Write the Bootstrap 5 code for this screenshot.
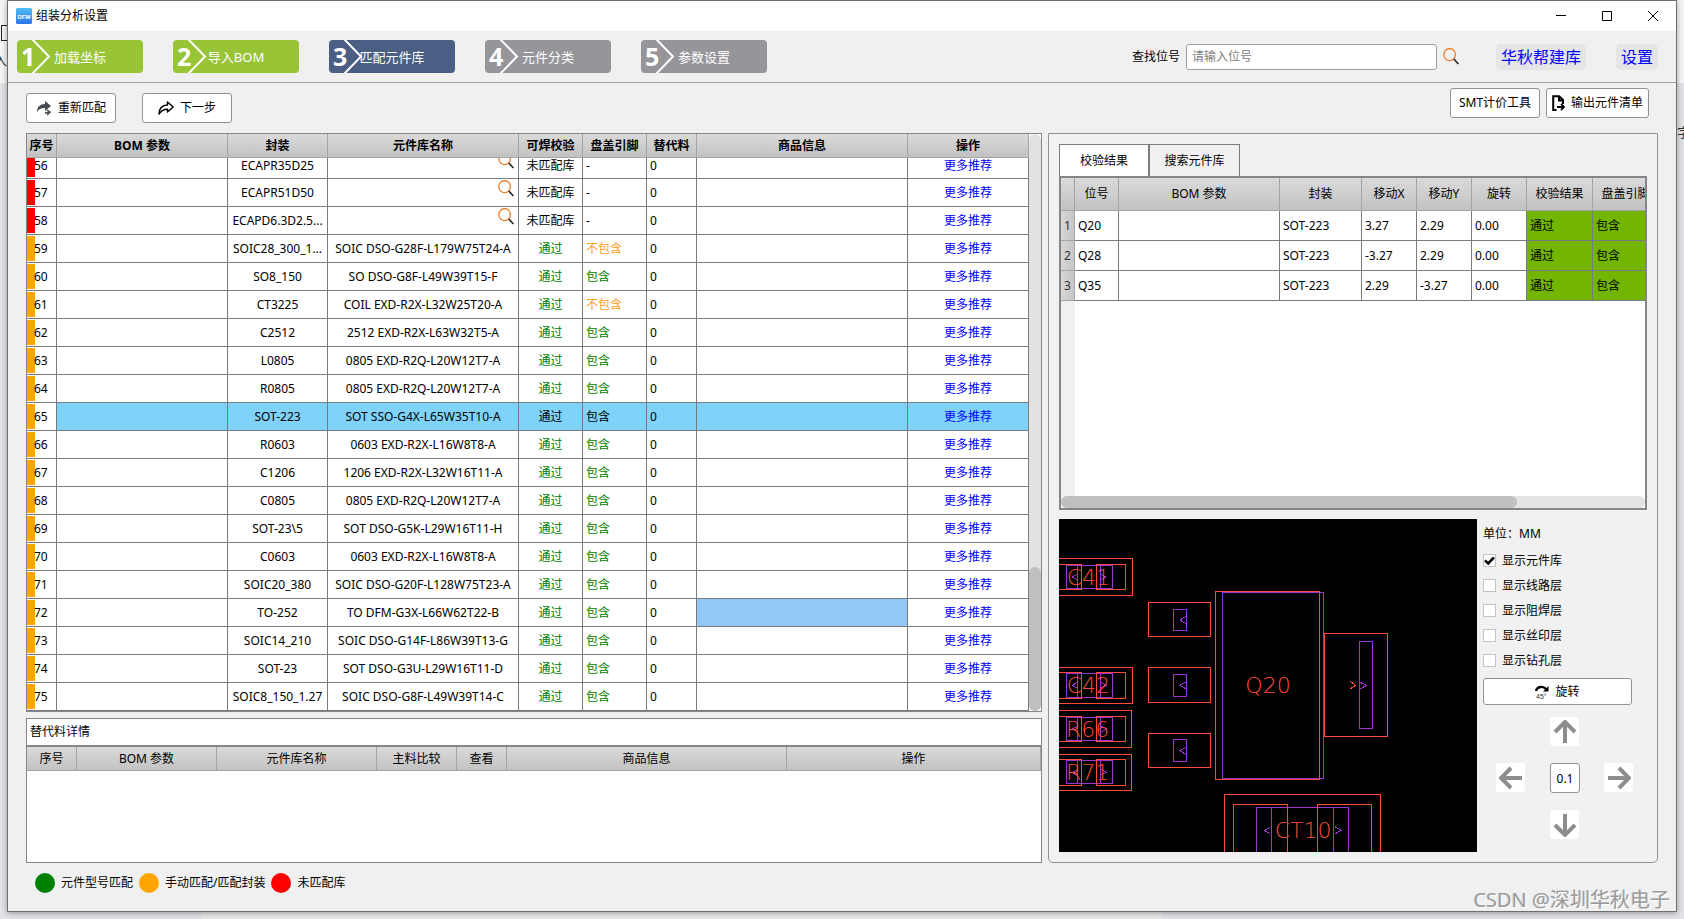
<!DOCTYPE html>
<html lang="zh-CN">
<head>
<meta charset="utf-8">
<meta name="viewport" content="width=device-width, initial-scale=1">
<title>组装分析设置</title>
<link href="https://cdn.jsdelivr.net/npm/bootstrap@5.3.0/dist/css/bootstrap.min.css" rel="stylesheet">
<style>
  body { font-family: "Noto Sans", "Noto Sans CJK SC", sans-serif; font-size: 12px; line-height: 16px; color: #000; min-height: 100vh; padding: 0 7px 7px;
    background: linear-gradient(90deg, transparent 12%, #e9e9ea 12% 69%, transparent 69%) bottom / 100% 7px no-repeat, linear-gradient(#f6f6f7 0 83px, #e1e3e6 83px); overflow-x: hidden; }
  button, input, label { font-size: 12px; line-height: 16px; color: #000; }
  .behind { position: absolute; overflow: hidden; width: 7px; height: 16px; font-size: 13px; color: #333; }
  .behind-left { left: 0; top: 52px; direction: rtl; }
  .behind-right { right: 0; top: 124px; }
  .behind-box { position: absolute; left: 1px; top: 25px; width: 8px; height: 16px; border: 1px solid #222; }
  .win { position: relative; background: #f0f0f0; border: 1px solid #6e6e6e; box-shadow: 0 1px 6px rgba(0,0,0,.35); min-height: calc(100vh - 7px); }
  .titlebar { height: 30px; background: #fff; padding: 0 18px 0 8px; }
  .applogo { width: 16px; height: 16px; }
  .winbtn { border: 0; background: none; padding: 0; width: 10px; height: 16px; display: flex; align-items: center; }
  .steps { height: 52px; border-bottom: 1px solid #a0a0a0; padding: 0 18px 0 9px; }
  .step { position: relative; width: 126px; height: 33px; border: 0; border-radius: 4px; color: #fff; font-size: 13px; padding: 0; background: #96969a; }
  .step.done { background: #98c435; }
  .step.now { background: #4b5e84; }
  .step b { position: absolute; left: 4px; top: 0; font-size: 25px; line-height: 33px; }
  .step svg { position: absolute; left: 14px; top: 0; }
  .find { width: 251px; height: 26px; border: 1px solid #a0a0a0; border-radius: 3px; padding: 0 5px; margin: 0 6px; background: #fff; }
  .find::placeholder { color: #808080; }
  .iconbtn { border: 0; background: none; padding: 0; display: flex; }
  .bluelink { background: #e5e5e6; border-radius: 5px; color: #00f; font-size: 16px; line-height: 26px; padding: 0 5px; text-decoration: none; }
  .tool { height: 30px; border: 1px solid #929292; border-radius: 3px; background: #fff; padding: 0 5px; display: flex; align-items: center; justify-content: center; gap: 6px; white-space: nowrap; }
  .wide { width: 90px; }
  .toolrow { padding: 5px 27px 0 18px; height: 50px; }
  .toolrow > .tool { margin-top: 5px; }
  .content { display: grid; grid-template-columns: minmax(0, 1016fr) minmax(0, 610fr); padding: 0 18px; gap: 6px; }
  .rightside { border: 1px solid #929292; border-radius: 0 0 5px 5px; padding: 10px; background: #f1f1f1; }
  .box { background: #fff; border: 1px solid #85858c; }
  .sheet { width: 100%; table-layout: fixed; border-collapse: separate; border-spacing: 0; }
  .sheet th { height: 24px; padding: 0; text-align: center; font-weight: 400; white-space: nowrap; overflow: hidden; background: linear-gradient(#dadada, #c2c2c2); border-right: 1px solid #a5a5a5; border-bottom: 1px solid #a5a5a5; }
  .sheet td { height: 28px; padding: 0 3px; overflow: hidden; white-space: nowrap; border-right: 1px solid #7b7b7e; border-bottom: 1px solid #7b7b7e; vertical-align: middle; }
  .main-sheet th { font-weight: 700; }
  .main-sheet td:nth-child(1) { padding: 0 0 0 7px; background: linear-gradient(orange, orange) 0 1px / 8px 25px no-repeat #fff; }
  .main-sheet tr.miss td:nth-child(1) { background-image: linear-gradient(red, red); }
  .main-sheet td:nth-child(3), .main-sheet td:nth-child(5), .main-sheet td:nth-child(9) { text-align: center; }
  .main-sheet td:nth-child(4) { padding: 0 5px; position: relative; }
  .main-sheet td:nth-child(4) div { display: flex; justify-content: center; overflow: hidden; }
  .main-sheet td:nth-child(5), .main-sheet td:nth-child(6) { color: green; }
  .main-sheet tr.miss td:nth-child(5), .main-sheet tr.miss td:nth-child(6), .main-sheet tr.sel td { color: #000; }
  .main-sheet td.no { color: #ff9a16 !important; }
  .main-sheet td button { position: absolute; right: 4px; top: 1px; }
  .main-sheet tr.cut td { height: 21px; line-height: 14px; padding-bottom: 5px; background-size: 8px 19px; background-position: 0 0; }
  .main-sheet tr.cut td button { top: -6px; }
  .main-sheet tr.sel td:nth-child(n+2) { background: #7fd3f8; }
  .main-sheet a { color: #00f; text-decoration: none; }
  .picked { background: #91c8f6; }
  .vbar { width: 12px; background: #e2e2e2; border-radius: 6px; }
  .vthumb { background: #c0c0c0; border-radius: 6px; height: 25%; }
  .hbar { height: 12px; background: #e4e4e4; border-radius: 6px; }
  .hthumb { background: #c0c0c0; border-radius: 6px; width: 78%; height: 12px; }
  .alt { height: 145px; margin-top: 6px; }
  .alt-title { height: 28px; padding: 5px 3px 0; border-bottom: 2px solid #85858c; }
  .legend { padding: 10px 9px 0; height: 48px; gap: 6px; align-items: flex-start; line-height: 20px; }
  .dot { width: 20px; height: 20px; border-radius: 50%; flex: none; }
  .tabbtn { width: 91px; height: 32px; border: 1px solid #7c7c7c; border-bottom: 0; background: #f1f1f1; margin-right: -1px; padding: 0; }
  .tabbtn.active { background: #fff; border-width: 1px 2px 0 1px; }
  .check-box { border: 2px solid #85858c; height: 334px; background: linear-gradient(90deg, #f0f0f0 14px, #fff 14px); }
  .check-sheet { min-width: 598px; }
  .check-sheet th { height: 33px; }
  .check-sheet td { height: 30px; }
  .check-sheet tbody th { background: linear-gradient(90deg, #d6d6d6, #c6c6c6); height: 30px; color: #333; }
  .check-sheet .ok { background: #72b503; }
  .board { height: 333px; flex: 1 1 0; min-width: 0; background: #000; display: block; }
  .side { width: 164px; }
  .side .opt { display: flex; align-items: center; gap: 6px; height: 25px; }
  .opt input { appearance: none; width: 13px; height: 13px; margin: 0; border: 1px solid #c4c4c4; background: #fff; flex: none; }
  .opt input:checked { background: #fff url("data:image/svg+xml,%3Csvg xmlns='http://www.w3.org/2000/svg' viewBox='0 0 11 11'%3E%3Cpath d='M1 5.4 4.2 8.4 10 2.4' fill='none' stroke='%23000' stroke-width='2.6'/%3E%3C/svg%3E") center / 11px no-repeat; }
  .unit { padding: 7px 0 6px; }
  .rotate { width: 149px; height: 27px; margin-top: 5px; }
  .pad { display: grid; grid-template-columns: 30px 30px 30px; column-gap: 24px; row-gap: 17px; margin: 12px 0 0 13px; }
  .pad button { width: 29px; height: 29px; border: 0; border-radius: 3px; background: #fff; padding: 0; display: flex; align-items: center; justify-content: center; }
  .pad input { width: 30px; height: 30px; border: 1px solid #929292; border-radius: 3px; text-align: center; padding: 0; background: #fff; }
  .watermark { position: absolute; right: 14px; bottom: 6px; font-size: 20px; line-height: 26px; color: #9b9b9b; text-shadow: 1px 1px 0 #fff, -1px 0 0 #d5d5d5; pointer-events: none; white-space: nowrap; }
</style>
</head>
<body class="position-relative">
<div class="behind behind-left">入</div><div class="behind-box"></div><div class="behind behind-right">字</div>
<svg width="0" height="0" class="position-absolute" aria-hidden="true">
  <symbol id="mag" viewBox="0 0 16 17"><ellipse cx="6.6" cy="6.6" rx="5.8" ry="6" fill="none" stroke="#ec7a26" stroke-width="1.3"/><path d="m10.8 11 4.6 5" stroke="#222" stroke-width="1.6"/></symbol>
  <symbol id="arrow" viewBox="0 0 24 24"><path d="M12 23V3M2 12 12 2l10 10" fill="none" stroke="#8d8d8d" stroke-width="4"/></symbol>
</svg>
<div class="win">
  <header class="titlebar d-flex align-items-center">
    <svg class="applogo" viewBox="0 0 16 16"><defs><linearGradient id="lg" x2="0" y2="1"><stop stop-color="#4dbdf0"/><stop offset="1" stop-color="#2f74ea"/></linearGradient></defs><rect width="16" height="16" rx="1.5" fill="url(#lg)"/><text x="8" y="10.5" text-anchor="middle" font-family="Liberation Sans" font-weight="700" font-size="6" fill="#fff">DFM</text></svg>
    <span class="ms-1">组装分析设置</span>
    <div class="ms-auto d-flex" style="gap:36px">
      <button class="winbtn" aria-label="最小化"><svg width="10" height="10"><path d="M0 4.5h10" stroke="#000"/></svg></button>
      <button class="winbtn" aria-label="最大化"><svg width="10" height="10"><path d="M.5.5h9v9h-9z" fill="none" stroke="#000"/></svg></button>
      <button class="winbtn" aria-label="关闭"><svg width="10" height="10"><path d="m0 0 10 10M10 0 0 10" stroke="#000"/></svg></button>
    </div>
  </header>
  <nav class="steps d-flex align-items-center">
    <div class="d-flex" style="gap:30px">
      <button class="step done"><b>1</b><svg width="22" height="33"><path d="m1-1 17 17.500L1 34" fill="none" stroke="#fff" stroke-width="2"/></svg>加载坐标</button>
      <button class="step done"><b>2</b><svg width="22" height="33"><path d="m1-1 17 17.500L1 34" fill="none" stroke="#fff" stroke-width="2"/></svg>导入BOM</button>
      <button class="step now"><b>3</b><svg width="22" height="33"><path d="m1-1 17 17.500L1 34" fill="none" stroke="#fff" stroke-width="2"/></svg>匹配元件库</button>
      <button class="step"><b>4</b><svg width="22" height="33"><path d="m1-1 17 17.500L1 34" fill="none" stroke="#fff" stroke-width="2"/></svg>元件分类</button>
      <button class="step"><b>5</b><svg width="22" height="33"><path d="m1-1 17 17.500L1 34" fill="none" stroke="#fff" stroke-width="2"/></svg>参数设置</button>
    </div>
    <div class="ms-auto d-flex align-items-center">
      <label for="find">查找位号</label>
      <input id="find" class="find" type="text" placeholder="请输入位号">
      <button class="iconbtn" aria-label="查找"><svg width="16" height="17"><use href="#mag"/></svg></button>
      <a href="#" class="bluelink" style="margin-left:37px">华秋帮建库</a>
      <a href="#" class="bluelink" style="margin-left:30px">设置</a>
    </div>
  </nav>
  <div class="toolrow d-flex">
    <button class="tool wide"><svg width="16" height="16" viewBox="0 0 16 16"><path d="M9 1l6 5-6 5V8C5 8 3 9 1 12 1 7 4 4 9 4z" fill="#444a50"/><path d="m9 13 5-1M11 10l3 2-3 3" stroke="#444a50" stroke-width="1.500" fill="none"/></svg>重新匹配</button>
    <button class="tool wide" style="margin-left:26px"><svg width="16" height="16" viewBox="0 0 16 16"><path d="m9.500 2 5.700 5-5.700 5V9.300C5.500 9.200 3.500 10.500 1 14 1.200 8.500 4 5.200 9.500 5z" fill="none" stroke="#000" stroke-width="1.400" stroke-linejoin="round"/></svg>下一步</button>
    <div class="ms-auto d-flex" style="gap:6px">
      <button class="tool wide">SMT计价工具</button>
      <button class="tool"><svg width="13" height="17" viewBox="0 0 13 17"><path d="M4.500 15H1.200V1.200h6L11 5v4M7 1v4.500h4" fill="none" stroke="#000" stroke-width="2"/><path d="M5 12h6M9 8.800l3 3.200-3 3.200" fill="none" stroke="#000" stroke-width="1.800"/></svg>输出元件清单</button>
    </div>
  </div>
  <main class="content">
    <section class="leftside">
      <div class="box d-flex">
        <table class="sheet main-sheet flex-fill">
          <colgroup><col width="30"><col width="171"><col width="100"><col width="191"><col width="64"><col width="64"><col width="50"><col><col width="121"></colgroup>
          <thead><tr><th>序号</th><th>BOM 参数</th><th>封装</th><th>元件库名称</th><th>可焊校验</th><th>盘盖引脚</th><th>替代料</th><th>商品信息</th><th>操作</th></tr></thead>
          <tbody>
            <tr class="miss cut"><td>56</td><td></td><td>ECAPR35D25</td><td><button class="iconbtn" aria-label="搜索"><svg width="16" height="17"><use href="#mag"/></svg></button></td><td>未匹配库</td><td>-</td><td>0</td><td></td><td><a href="#">更多推荐</a></td></tr>
            <tr class="miss"><td>57</td><td></td><td>ECAPR51D50</td><td><button class="iconbtn" aria-label="搜索"><svg width="16" height="17"><use href="#mag"/></svg></button></td><td>未匹配库</td><td>-</td><td>0</td><td></td><td><a href="#">更多推荐</a></td></tr>
            <tr class="miss"><td>58</td><td></td><td>ECAPD6.3D2.5...</td><td><button class="iconbtn" aria-label="搜索"><svg width="16" height="17"><use href="#mag"/></svg></button></td><td>未匹配库</td><td>-</td><td>0</td><td></td><td><a href="#">更多推荐</a></td></tr>
            <tr><td>59</td><td></td><td>SOIC28_300_1...</td><td><div>SOIC DSO-G28F-L179W75T24-A</div></td><td>通过</td><td class="no">不包含</td><td>0</td><td></td><td><a href="#">更多推荐</a></td></tr>
            <tr><td>60</td><td></td><td>SO8_150</td><td><div>SO DSO-G8F-L49W39T15-F</div></td><td>通过</td><td>包含</td><td>0</td><td></td><td><a href="#">更多推荐</a></td></tr>
            <tr><td>61</td><td></td><td>CT3225</td><td><div>COIL EXD-R2X-L32W25T20-A</div></td><td>通过</td><td class="no">不包含</td><td>0</td><td></td><td><a href="#">更多推荐</a></td></tr>
            <tr><td>62</td><td></td><td>C2512</td><td><div>2512 EXD-R2X-L63W32T5-A</div></td><td>通过</td><td>包含</td><td>0</td><td></td><td><a href="#">更多推荐</a></td></tr>
            <tr><td>63</td><td></td><td>L0805</td><td><div>0805 EXD-R2Q-L20W12T7-A</div></td><td>通过</td><td>包含</td><td>0</td><td></td><td><a href="#">更多推荐</a></td></tr>
            <tr><td>64</td><td></td><td>R0805</td><td><div>0805 EXD-R2Q-L20W12T7-A</div></td><td>通过</td><td>包含</td><td>0</td><td></td><td><a href="#">更多推荐</a></td></tr>
            <tr class="sel"><td>65</td><td></td><td>SOT-223</td><td><div>SOT SSO-G4X-L65W35T10-A</div></td><td>通过</td><td>包含</td><td>0</td><td></td><td><a href="#">更多推荐</a></td></tr>
            <tr><td>66</td><td></td><td>R0603</td><td><div>0603 EXD-R2X-L16W8T8-A</div></td><td>通过</td><td>包含</td><td>0</td><td></td><td><a href="#">更多推荐</a></td></tr>
            <tr><td>67</td><td></td><td>C1206</td><td><div>1206 EXD-R2X-L32W16T11-A</div></td><td>通过</td><td>包含</td><td>0</td><td></td><td><a href="#">更多推荐</a></td></tr>
            <tr><td>68</td><td></td><td>C0805</td><td><div>0805 EXD-R2Q-L20W12T7-A</div></td><td>通过</td><td>包含</td><td>0</td><td></td><td><a href="#">更多推荐</a></td></tr>
            <tr><td>69</td><td></td><td>SOT-23\5</td><td><div>SOT DSO-G5K-L29W16T11-H</div></td><td>通过</td><td>包含</td><td>0</td><td></td><td><a href="#">更多推荐</a></td></tr>
            <tr><td>70</td><td></td><td>C0603</td><td><div>0603 EXD-R2X-L16W8T8-A</div></td><td>通过</td><td>包含</td><td>0</td><td></td><td><a href="#">更多推荐</a></td></tr>
            <tr><td>71</td><td></td><td>SOIC20_380</td><td><div>SOIC DSO-G20F-L128W75T23-A</div></td><td>通过</td><td>包含</td><td>0</td><td></td><td><a href="#">更多推荐</a></td></tr>
            <tr><td>72</td><td></td><td>TO-252</td><td><div>TO DFM-G3X-L66W62T22-B</div></td><td>通过</td><td>包含</td><td>0</td><td class="picked"></td><td><a href="#">更多推荐</a></td></tr>
            <tr><td>73</td><td></td><td>SOIC14_210</td><td><div>SOIC DSO-G14F-L86W39T13-G</div></td><td>通过</td><td>包含</td><td>0</td><td></td><td><a href="#">更多推荐</a></td></tr>
            <tr><td>74</td><td></td><td>SOT-23</td><td><div>SOT DSO-G3U-L29W16T11-D</div></td><td>通过</td><td>包含</td><td>0</td><td></td><td><a href="#">更多推荐</a></td></tr>
            <tr><td>75</td><td></td><td>SOIC8_150_1.27</td><td><div>SOIC DSO-G8F-L49W39T14-C</div></td><td>通过</td><td>包含</td><td>0</td><td></td><td><a href="#">更多推荐</a></td></tr>
          </tbody>
        </table>
        <div class="vbar d-flex flex-column justify-content-end flex-shrink-0"><div class="vthumb"></div></div>
      </div>
      <div class="box alt">
        <div class="alt-title">替代料详情</div>
        <table class="sheet">
          <colgroup><col width="50"><col width="140"><col width="160"><col width="80"><col width="50"><col width="280"><col></colgroup>
          <thead><tr><th>序号</th><th>BOM 参数</th><th>元件库名称</th><th>主料比较</th><th>查看</th><th>商品信息</th><th>操作</th></tr></thead>
        </table>
      </div>
    </section>
    <section class="rightside">
      <div class="d-flex">
        <button class="tabbtn active">校验结果</button><button class="tabbtn">搜索元件库</button>
      </div>
      <div class="check-box d-flex flex-column justify-content-between overflow-hidden">
        <div class="overflow-hidden">
        <table class="sheet check-sheet">
          <colgroup><col width="14"><col width="44"><col><col width="82"><col width="55"><col width="55"><col width="55"><col width="66"><col width="66"></colgroup>
          <thead><tr><th></th><th>位号</th><th>BOM 参数</th><th>封装</th><th>移动X</th><th>移动Y</th><th>旋转</th><th>校验结果</th><th>盘盖引脚</th></tr></thead>
          <tbody>
            <tr><th>1</th><td>Q20</td><td></td><td>SOT-223</td><td>3.27</td><td>2.29</td><td>0.00</td><td class="ok">通过</td><td class="ok">包含</td></tr>
            <tr><th>2</th><td>Q28</td><td></td><td>SOT-223</td><td>-3.27</td><td>2.29</td><td>0.00</td><td class="ok">通过</td><td class="ok">包含</td></tr>
            <tr><th>3</th><td>Q35</td><td></td><td>SOT-223</td><td>2.29</td><td>-3.27</td><td>0.00</td><td class="ok">通过</td><td class="ok">包含</td></tr>
          </tbody>
        </table>
        </div>
        <div class="hbar"><div class="hthumb"></div></div>
      </div>
      <div class="d-flex" style="gap:6px;margin-top:9px">
        <svg class="board" viewBox="27 117 1254 999" preserveAspectRatio="xMidYMid slice">
          <g fill="none" stroke-width="3" stroke="#9a35cf" shape-rendering="crispEdges">
            <path d="M49 256h139v69H49zM82.500 256v69M151.500 256v69M49 580h139v73H49zM82.500 580v73M151.500 580v73M49 712h139v70H49zM82.500 712v70M151.500 712v70M49 841h139v70H49zM82.500 841v70M151.500 841v70"/>
            <path d="M370 388h40v64h-40zM370 583h40v67h-40zM370 778h40v67h-40zM517 337h303v559H517zM928 484h40v262h-40zM619 1130V982h277v148M664.500 982v140M850.500 982v140"/>
            <path d="m82 282-15 9 15 9M152 282l15 9-15 9M82 607l-15 9 15 9M152 607l18 9-18 9M82 738l-15 9 15 9M152 738l18 9-18 9M82 869l-15 9 15 9M152 868l18 9-18 9M409 409l-20 11 20 11M409 606l-20 10 20 11M409 802l-20 10 20 12M930 607l20 9-20 11M661 1042l-18 9 18 11M855 1040l18 11-18 11"/>
          </g>
          <g fill="none" stroke-width="3" stroke="#ff4b38" shape-rendering="crispEdges">
            <path d="M20 235.500h228v111H20zM20 253h75.500v75H20zM139 253h88v75h-88zM20 562h228v108H20zM20 577h75.500v79H20zM139 577h88v79h-88zM20 691h225v111H20zM20 709h75.500v75H20zM139 709h88v75h-88zM20 823h225v108H20zM20 838h75.500v78H20zM139 838h88v78h-88z"/>
            <path d="M295 367h187v102H295zM295 562h187v105H295zM295 760h187v102H295zM496 334h313v564H496zM823 460h190v309H823zM523 1130V943h469v187M550 1130V973h163v157M802 1130V973h163v157M900 604l17 12-17 11"/>
          </g>
          <g fill="#ff4b38" font-family="DejaVu Sans" font-weight="200" font-size="66">
            <text x="50" y="315">C41</text><text x="50" y="638">C42</text><text x="48" y="771">R66</text><text x="48" y="899">R71</text>
            <text x="586" y="638">Q20</text><text x="674" y="1074">CT10</text>
          </g>
        </svg>
        <div class="side">
          <div class="unit">单位：MM</div>
          <label class="opt"><input type="checkbox" checked>显示元件库</label>
          <label class="opt"><input type="checkbox">显示线路层</label>
          <label class="opt"><input type="checkbox">显示阻焊层</label>
          <label class="opt"><input type="checkbox">显示丝印层</label>
          <label class="opt"><input type="checkbox">显示钻孔层</label>
          <button class="tool rotate"><svg width="14" height="14" viewBox="0 0 14 14"><path d="M1 6C2 1.500 8 .5 11 4" fill="none" stroke="#000" stroke-width="2.400"/><path d="M13.500 1v5.500H8z"/><text x="1" y="13.500" font-family="Liberation Sans" font-size="7" fill="#333">45°</text></svg>旋转</button>
          <div class="pad">
            <span></span><button aria-label="上移"><svg width="24" height="24"><use href="#arrow"/></svg></button><span></span>
            <button aria-label="左移"><svg width="24" height="24" viewBox="0 0 24 24"><path d="M23 12H3M12 2 2 12l10 10" fill="none" stroke="#8d8d8d" stroke-width="4"/></svg></button>
            <input type="text" value="0.1" aria-label="步长">
            <button aria-label="右移"><svg width="24" height="24" viewBox="0 0 24 24"><path d="M1 12h20M12 2l10 10-10 10" fill="none" stroke="#8d8d8d" stroke-width="4"/></svg></button>
            <span></span><button aria-label="下移"><svg width="24" height="24" viewBox="0 0 24 24"><path d="M12 1v20M2 12l10 10 10-10" fill="none" stroke="#8d8d8d" stroke-width="4"/></svg></button><span></span>
          </div>
        </div>
      </div>
    </section>
  </main>
  <footer class="legend d-flex" style="margin-left:18px">
    <span class="dot" style="background:green"></span><span>元件型号匹配</span>
    <span class="dot" style="background:orange"></span><span>手动匹配/匹配封装</span>
    <span class="dot" style="background:red"></span><span>未匹配库</span>
  </footer>
</div>
<div class="watermark">CSDN @深圳华秋电子</div>
<script src="https://cdn.jsdelivr.net/npm/bootstrap@5.3.0/dist/js/bootstrap.bundle.min.js"></script>
</body>
</html>
